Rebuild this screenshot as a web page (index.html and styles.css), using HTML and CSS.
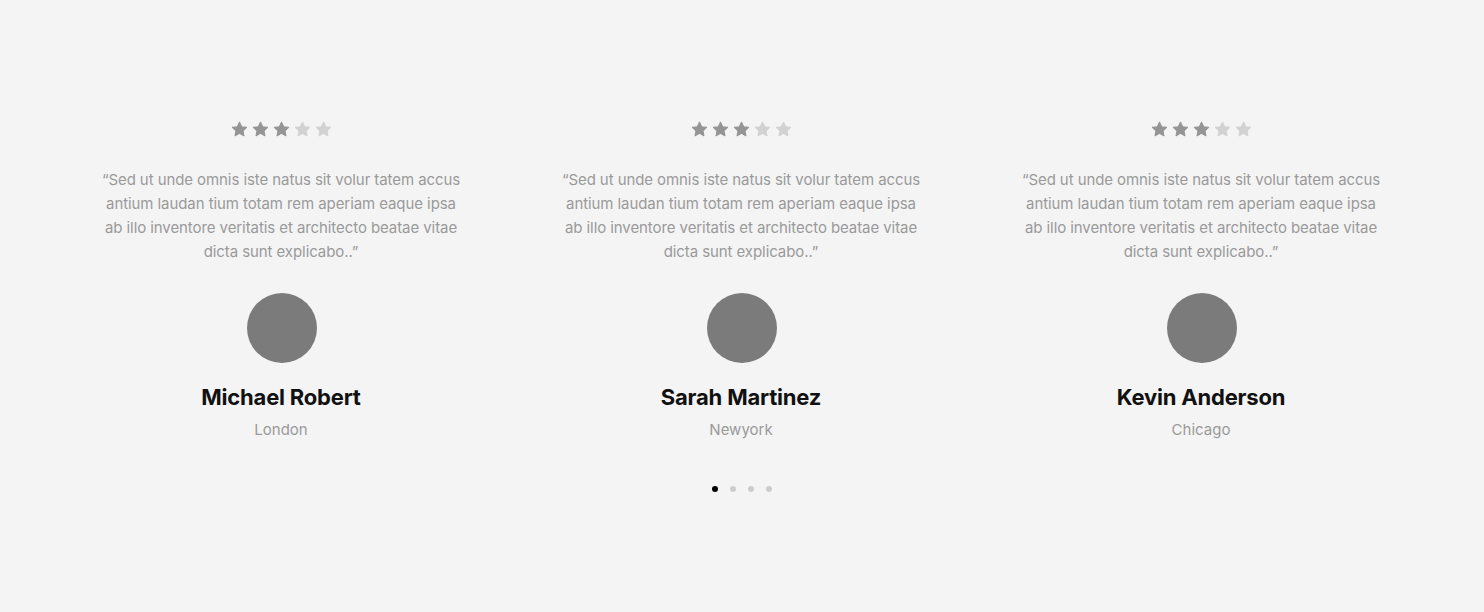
FILE: index.html
```html
<!DOCTYPE html>
<html lang="en">
<head>
<meta charset="utf-8">
<title>Testimonials</title>
<link rel="stylesheet" href="styles.css">
</head>
<body>
<svg width="0" height="0" class="defs">
  <defs>
    <symbol id="star" viewBox="0 0 24 24">
      <path d="M12 1.8l3.05 6.3 6.9.95-5.02 4.8 1.24 6.85L12 17.4l-6.17 3.3 1.24-6.85-5.02-4.8 6.9-.95z" stroke-linejoin="round" stroke-width="1.6"/>
    </symbol>
  </defs>
</svg>
<section class="testimonials">
  <div class="cards">
    <article class="card">
      <div class="stars">
        <svg class="star on"><use href="#star"/></svg><svg class="star on"><use href="#star"/></svg><svg class="star on"><use href="#star"/></svg><svg class="star off"><use href="#star"/></svg><svg class="star off"><use href="#star"/></svg>
      </div>
      <p class="quote">“Sed ut unde omnis iste natus sit volur tatem accus antium laudan tium totam rem aperiam eaque ipsa ab illo inventore veritatis et architecto beatae vitae dicta sunt explicabo..”</p>
      <div class="avatar"></div>
      <h3 class="name">Michael Robert</h3>
      <div class="city">London</div>
    </article>
    <article class="card">
      <div class="stars">
        <svg class="star on"><use href="#star"/></svg><svg class="star on"><use href="#star"/></svg><svg class="star on"><use href="#star"/></svg><svg class="star off"><use href="#star"/></svg><svg class="star off"><use href="#star"/></svg>
      </div>
      <p class="quote">“Sed ut unde omnis iste natus sit volur tatem accus antium laudan tium totam rem aperiam eaque ipsa ab illo inventore veritatis et architecto beatae vitae dicta sunt explicabo..”</p>
      <div class="avatar"></div>
      <h3 class="name">Sarah Martinez</h3>
      <div class="city">Newyork</div>
    </article>
    <article class="card">
      <div class="stars">
        <svg class="star on"><use href="#star"/></svg><svg class="star on"><use href="#star"/></svg><svg class="star on"><use href="#star"/></svg><svg class="star off"><use href="#star"/></svg><svg class="star off"><use href="#star"/></svg>
      </div>
      <p class="quote">“Sed ut unde omnis iste natus sit volur tatem accus antium laudan tium totam rem aperiam eaque ipsa ab illo inventore veritatis et architecto beatae vitae dicta sunt explicabo..”</p>
      <div class="avatar"></div>
      <h3 class="name">Kevin Anderson</h3>
      <div class="city">Chicago</div>
    </article>
  </div>
  <div class="dots">
    <span class="dot active"></span><span class="dot"></span><span class="dot"></span><span class="dot"></span>
  </div>
</section>
</body>
</html>
```

FILE: styles.css
```css
* { box-sizing: border-box; }
html, body { margin: 0; padding: 0; }
body {
  background: #f4f4f4;
  font-family: Inter, "Noto Sans", sans-serif;
  width: 1484px;
  height: 612px;
  overflow: hidden;
}
.defs { position: absolute; width: 0; height: 0; }
.testimonials {
  padding-top: 119px;
}
.cards {
  display: flex;
  margin-left: 51px;
  width: 1380px;
}
.card {
  width: 460px;
  display: flex;
  flex-direction: column;
  align-items: center;
  padding: 0 48px;
}
.stars {
  display: flex;
  gap: 4px;
  height: 20px;
  align-items: center;
  margin-left: 1px;
}
.star {
  width: 17px;
  height: 17px;
}
.star.on { fill: #959595; stroke: #959595; }
.star.off { fill: #d2d2d2; stroke: #d2d2d2; }
.quote {
  margin: 29px 0 0;
  font-size: 15px;
  line-height: 24px;
  color: #9a9a9a;
  text-align: center;
  letter-spacing: -0.08px;
}
.avatar {
  width: 70px;
  height: 70px;
  border-radius: 50%;
  background: #7b7b7c;
  margin-top: 29px;
  margin-left: 1px;
}
.name {
  margin: 20px 0 0;
  font-size: 22px;
  line-height: 28px;
  font-weight: 700;
  color: #111;
  letter-spacing: -0.2px;
}
.city {
  margin-top: 9px;
  font-size: 15px;
  line-height: 20px;
  color: #9a9a9a;
}
.dots {
  display: flex;
  justify-content: center;
  gap: 12px;
  margin-top: 46px;
  margin-left: -1px;
}
.dot {
  width: 6px;
  height: 6px;
  border-radius: 50%;
  background: #cdcdcd;
}
.dot.active { background: #000; }
```
